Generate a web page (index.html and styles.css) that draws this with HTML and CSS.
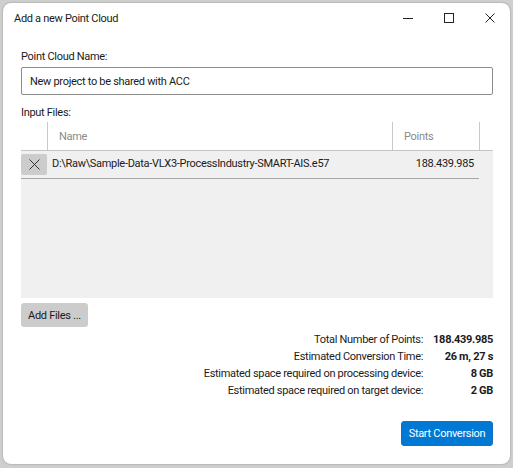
FILE: index.html
```html
<!DOCTYPE html>
<html>
<head>
<meta charset="utf-8">
<link rel="stylesheet" href="styles.css">
</head>
<body>
<div class="window">
  <div class="titlebar">
    <span class="title">Add a new Point Cloud</span>
    <div class="controls">
      <span class="ctl"><svg width="10" height="10" viewBox="0 0 10 10"><line x1="0" y1="5.5" x2="10" y2="5.5" stroke="#222" stroke-width="1"/></svg></span>
      <span class="ctl"><svg width="10" height="10" viewBox="0 0 10 10"><rect x="0.5" y="0.5" width="9" height="9" fill="none" stroke="#222" stroke-width="1"/></svg></span>
      <span class="ctl"><svg width="10" height="10" viewBox="0 0 10 10"><path d="M0.5 0.5 L9.5 9.5 M9.5 0.5 L0.5 9.5" stroke="#222" stroke-width="1"/></svg></span>
    </div>
  </div>
  <div class="content">
    <div class="label first">Point Cloud Name:</div>
    <div class="input">New project to be shared with ACC</div>
    <div class="label files">Input Files:</div>
    <div class="table">
      <div class="thead">
        <div class="c-x"></div>
        <div class="c-name">Name</div>
        <div class="c-pts">Points</div>
      </div>
      <div class="tbody">
        <div class="row">
          <div class="c-x"><span class="xbtn"><svg width="11" height="11" viewBox="0 0 11 11"><path d="M0.5 0.5 L10.5 10.5 M10.5 0.5 L0.5 10.5" stroke="#333" stroke-width="1"/></svg></span></div>
          <div class="c-name">D:\Raw\Sample-Data-VLX3-ProcessIndustry-SMART-AIS.e57</div>
          <div class="c-pts">188.439.985</div>
        </div>
      </div>
    </div>
    <div class="btn gray">Add Files ...</div>
    <div class="summary">
      <span class="k">Total Number of Points:</span><span class="v">188.439.985</span>
      <span class="k">Estimated Conversion Time:</span><span class="v">26 m, 27 s</span>
      <span class="k">Estimated space required on processing device:</span><span class="v">8 GB</span>
      <span class="k">Estimated space required on target device:</span><span class="v">2 GB</span>
    </div>
    <div class="footer">
      <div class="btn primary">Start Conversion</div>
    </div>
  </div>
</div>
</body>
</html>
```

FILE: styles.css
```css
html, body {
  margin: 0;
  padding: 0;
}
body {
  background: #cfcfcf;
  width: 513px;
  height: 468px;
  overflow: hidden;
  font-family: Roboto, "Noto Sans", sans-serif;
  font-size: 11px;
  letter-spacing: -0.3px;
  color: #1b1b1b;
}
.window {
  margin: 3px 0 0 3px;
  width: 507px;
  height: 461px;
  background: #fff;
  border-radius: 8px;
  box-shadow: 0 0 2px rgba(0,0,0,0.35);
  box-sizing: border-box;
  display: flex;
  flex-direction: column;
}
.titlebar {
  height: 30px;
  display: flex;
  align-items: center;
  justify-content: space-between;
  padding-left: 11px;
}
.controls {
  display: flex;
  height: 30px;
}
.ctl {
  width: 41px;
  display: flex;
  align-items: center;
  justify-content: center;
}
.content {
  padding: 0 17px 0 18px;
  display: flex;
  flex-direction: column;
}
.label {
  line-height: 16px;
}
.label.first {
  margin-top: 16px;
}
.label.files {
  margin-top: 10px;
}
.input {
  margin-top: 2px;
  height: 28px;
  box-sizing: border-box;
  border: 1px solid #8c8c8c;
  border-radius: 2px;
  padding: 0 8px;
  display: flex;
  align-items: center;
}
.table {
  margin-top: 1px;
  height: 176px;
  display: flex;
  flex-direction: column;
}
.thead {
  height: 28px;
  display: flex;
  border-bottom: 1px solid #c4c4c4;
  color: #8a8a8a;
}
.thead .c-x {
  width: 26px;
  border-right: 1px solid #c8c8c8;
}
.thead .c-name {
  width: 333px;
  padding-left: 11px;
  border-right: 1px solid #c8c8c8;
  display: flex;
  align-items: center;
}
.thead .c-pts {
  width: 75px;
  padding-left: 11px;
  border-right: 1px solid #c8c8c8;
  display: flex;
  align-items: center;
}
.tbody {
  flex: 1;
  background: #f0f0f0;
}
.row {
  width: 458px;
  height: 27px;
  display: flex;
  align-items: center;
  border-bottom: 1px solid #a8a8a8;
  white-space: nowrap;
}
.row .c-x {
  width: 26px;
  height: 27px;
  display: flex;
  align-items: flex-start;
}
.xbtn {
  margin-top: 3px;
  width: 26px;
  height: 21px;
  background: #cccccc;
  border-radius: 2px;
  display: flex;
  align-items: center;
  justify-content: center;
}
.row .c-name {
  flex: 1;
  padding-left: 5px;
  margin-bottom: 2px;
}
.row .c-pts {
  width: 100px;
  text-align: right;
  padding-right: 5px;
  margin-bottom: 2px;
}
.btn {
  height: 24px;
  display: flex;
  align-items: center;
  justify-content: center;
  border-radius: 3px;
  box-sizing: border-box;
  white-space: nowrap;
}
.btn.gray {
  margin-top: 5px;
  width: 67px;
  background: #cccccc;
}
.summary {
  margin-top: 4px;
  display: grid;
  grid-template-columns: 1fr auto;
  column-gap: 10px;
  line-height: 17px;
  text-align: right;
}
.summary .v {
  font-weight: bold;
  min-width: 59px;
}
.footer {
  margin-top: 22px;
  display: flex;
  justify-content: flex-end;
}
.btn.primary {
  width: 92px;
  height: 25px;
  background: #0078d4;
  color: #fff;
  border: 1px solid #1a6fc0;
}
```
